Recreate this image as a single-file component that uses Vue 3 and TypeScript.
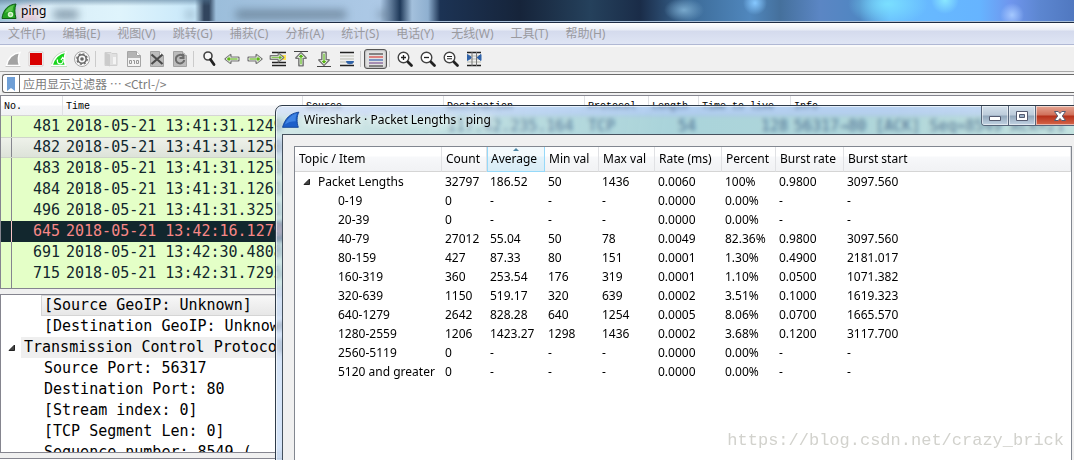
<script setup lang="ts">
import { ref } from 'vue'

interface Packet {
  no: number
  time: string
  state?: 'selected' | 'error'
  source?: string
  destination?: string
  protocol?: string
  length?: string
  ttl?: string
  info?: string
}

const menus: string[] = [
  '文件(F)', '编辑(E)', '视图(V)', '跳转(G)', '捕获(C)', '分析(A)',
  '统计(S)', '电话(Y)', '无线(W)', '工具(T)', '帮助(H)',
]

const packets: Packet[] = [
  { no: 481, time: '2018-05-21 13:41:31.1249', destination: '117.42.235.164', protocol: 'TCP', length: '54', ttl: '128', info: '56317→80 [ACK] Seq=8549 Ack=21' },
  { no: 482, time: '2018-05-21 13:41:31.1250', state: 'selected' },
  { no: 483, time: '2018-05-21 13:41:31.1251' },
  { no: 484, time: '2018-05-21 13:41:31.1261' },
  { no: 496, time: '2018-05-21 13:41:31.3251' },
  { no: 645, time: '2018-05-21 13:42:16.1279', state: 'error' },
  { no: 691, time: '2018-05-21 13:42:30.4808' },
  { no: 715, time: '2018-05-21 13:42:31.7295' },
]

const columns: string[] = [
  'Topic / Item', 'Count', 'Average', 'Min val', 'Max val',
  'Rate (ms)', 'Percent', 'Burst rate', 'Burst start',
]
const sorted = ref('Average')

const stats: string[][] = [
  ['Packet Lengths', '32797', '186.52', '50', '1436', '0.0060', '100%', '0.9800', '3097.560'],
  ['0-19', '0', '-', '-', '-', '0.0000', '0.00%', '-', '-'],
  ['20-39', '0', '-', '-', '-', '0.0000', '0.00%', '-', '-'],
  ['40-79', '27012', '55.04', '50', '78', '0.0049', '82.36%', '0.9800', '3097.560'],
  ['80-159', '427', '87.33', '80', '151', '0.0001', '1.30%', '0.4900', '2181.017'],
  ['160-319', '360', '253.54', '176', '319', '0.0001', '1.10%', '0.0500', '1071.382'],
  ['320-639', '1150', '519.17', '320', '639', '0.0002', '3.51%', '0.1000', '1619.323'],
  ['640-1279', '2642', '828.28', '640', '1254', '0.0005', '8.06%', '0.0700', '1665.570'],
  ['1280-2559', '1206', '1423.27', '1298', '1436', '0.0002', '3.68%', '0.1200', '3117.700'],
  ['2560-5119', '0', '-', '-', '-', '0.0000', '0.00%', '-', '-'],
  ['5120 and greater', '0', '-', '-', '-', '0.0000', '0.00%', '-', '-'],
]
</script>

<template>
  <div class="desktop" lang="zh-CN">
    <header class="titlebar">
      <div class="scenery" aria-hidden="true">
        <i class="smudge s1"></i><i class="smudge s2"></i><i class="smudge s3"></i><i class="smudge s4"></i>
      </div>
      <svg class="app-icon" viewBox="0 0 16 17" aria-hidden="true">
        <path d="M1 15.500C2 7 7 1.500 15 1c-1.500 4-1.500 9 0 14.500z" fill="#23a123" stroke="#0d5c12" />
        <path d="M4 10C6 5 9 3 13 2c-1 2-1.500 4-1.500 6C8 8 6 9 4 10z" fill="#74d35f" opacity=".7" />
        <circle cx="9.500" cy="11.500" r="2" fill="#8fdc80" stroke="#d8f6d0" stroke-width="1.500" />
      </svg>
      <h1>ping</h1>
    </header>

    <nav class="menubar">
      <button v-for="m in menus" :key="m" type="button">{{ m }}</button>
    </nav>

    <div class="toolbar" role="toolbar">
      <button type="button" aria-label="Start">
        <svg viewBox="0 0 20 20"><path d="M3.500 16.500C5 9 9 4.500 17 3.500c-2 3.500-2 8.500-.5 13z" fill="#a3a3a3" stroke="#fff" stroke-width="1.500" /><path d="M2.500 17.500h15" stroke="#c6c6c6" /></svg>
      </button>
      <button type="button" aria-label="Stop">
        <svg viewBox="0 0 20 20"><path d="M3.500 3.500h13v13h-13z" fill="#d90000" stroke="#fff" /><path d="M3 3h14v14H3z" fill="none" stroke="#c5baba" stroke-width=".6" /></svg>
      </button>
      <button type="button" aria-label="Restart">
        <svg viewBox="0 0 20 20"><path d="M3 16.500C5 9 9 4.500 17 3c-2 4-2 9-.5 13.500z" fill="#18d51d" stroke="#fff" stroke-width="1.500" /><path d="M2 17.500h16M2.500 15C4 9 8 4 16 2.500" fill="none" stroke="#aacfaa" stroke-width=".7" /><path d="M8.500 10.500c-1 3 1 4.500 3 4.300 2-.2 3-2 2.500-4M12 11l1.700-2.500L16 11" fill="none" stroke="#fff" stroke-width="1.300" /></svg>
      </button>
      <button type="button" aria-label="Options">
        <svg viewBox="0 0 20 20"><circle cx="10" cy="10" r="7.500" fill="#f8f8f8" stroke="#a5a5a5" /><circle cx="10" cy="10" r="4.200" fill="none" stroke="#666" stroke-width="1.600" /><circle cx="10" cy="10" r="5.300" fill="none" stroke="#666" stroke-width="1.200" stroke-dasharray="2 2.160" /><circle cx="10" cy="10" r="1.800" fill="#666" /></svg>
      </button>
      <i class="sep"></i>
      <button type="button" aria-label="Open">
        <svg viewBox="0 0 20 20"><path d="M4 3.500h6l1 1h5v12H4z" fill="#e0e0e0" stroke="#cfcfcf" /><path d="M4 3.500l5 2v12l-5-2z" fill="#cbcbcb" /><path d="M12 8h3v7h-3z" fill="#f4f4f4" /></svg>
      </button>
      <button type="button" aria-label="Save">
        <svg viewBox="0 0 20 20"><path d="M3.500 2.500h9l4 4v11h-13z" fill="#f3f3f3" stroke="#a5a5a5" /><path d="M4 3h8v4h4v2H4z" fill="#b4b4b4" /><path d="M12.500 2.500v4h4" fill="#fff" stroke="#a5a5a5" /><path d="M5.500 11.500h2v3h-2zM12.500 11.500h2v3h-2zM9 11.500h1.500V15" fill="none" stroke="#999" /></svg>
      </button>
      <button type="button" aria-label="Close">
        <svg viewBox="0 0 20 20"><path d="M3.500 2.500h9l4 4v11h-13z" fill="#bcbcbc" stroke="#a2a2a2" /><path d="M12.500 2.500v4h4" fill="#fff" stroke="#a5a5a5" /><path d="M4.500 5.500l11 9.500M15.500 5.500l-11 9.500" stroke="#4b4b4b" stroke-width="2.200" /></svg>
      </button>
      <button type="button" aria-label="Reload">
        <svg viewBox="0 0 20 20"><path d="M3.500 2.500h9l4 4v11h-13z" fill="#bcbcbc" stroke="#a2a2a2" /><path d="M12.500 2.500v4h4" fill="#fff" stroke="#a5a5a5" /><path d="M13 7a4.300 4.300 0 1 0 1.300 4M9.500 9h4V4.500" fill="none" stroke="#6c6c6c" stroke-width="2" /></svg>
      </button>
      <i class="sep"></i>
      <button type="button" aria-label="Find">
        <svg viewBox="0 0 20 20"><circle cx="9" cy="7" r="4" fill="#f8f8f8" stroke="#444" stroke-width="1.600" /><path d="M11.500 10.500l3.500 5" stroke="#222" stroke-width="2.800" stroke-linecap="round" /></svg>
      </button>
      <button type="button" aria-label="Previous">
        <svg viewBox="0 0 20 20"><path d="M3.500 10l5-4v2.500h8v3h-8V14z" fill="#62b81f" stroke="#777" stroke-width="2.200" stroke-linejoin="round" /><path d="M4 10l4-3.200V9h8v2H8v2.200z" fill="#61b51b" stroke="#fff" stroke-width=".8" /></svg>
      </button>
      <button type="button" aria-label="Next">
        <svg viewBox="0 0 20 20"><path d="M16.500 10l-5-4v2.500h-8v3h8V14z" fill="#62b81f" stroke="#777" stroke-width="2.200" stroke-linejoin="round" /><path d="M16 10l-4-3.200V9H4v2h8v2.200z" fill="#61b51b" stroke="#fff" stroke-width=".8" /></svg>
      </button>
      <button type="button" aria-label="Go to packet">
        <svg viewBox="0 0 20 20"><path d="M4 3.500h14M4 13.500h14M4 16.500h14" stroke="#222" stroke-width="1.400" /><path d="M12 6h6v5h-6z" fill="#ffe44f" /><path d="M15.500 8.500l-5-4V7H2.500v3h8v2.500z" fill="#62b81f" stroke="#777" stroke-width="1.800" stroke-linejoin="round" /><path d="M14.500 8.500L11 5.700v2H3.200v1.600H11v2z" fill="#62b81f" stroke="#fff" stroke-width=".7" /></svg>
      </button>
      <button type="button" aria-label="First packet">
        <svg viewBox="0 0 20 20"><path d="M3 2.500h14" stroke="#444" /><path d="M10 4l5 5h-3v7.500H8V9H5z" fill="#57b516" stroke="#777" stroke-width="1.800" stroke-linejoin="round" /><path d="M10 4.800l3.400 3.600H11v7.300H9V8.400H6.600z" fill="#57b516" stroke="#fff" stroke-width=".8" /></svg>
      </button>
      <button type="button" aria-label="Last packet">
        <svg viewBox="0 0 20 20"><path d="M3 17.500h14" stroke="#444" /><path d="M10 16l5-5h-3V3.500H8V11H5z" fill="#57b516" stroke="#777" stroke-width="1.800" stroke-linejoin="round" /><path d="M10 15.200l3.400-3.600H11V4.300H9v7.300H6.600z" fill="#57b516" stroke="#fff" stroke-width=".8" /></svg>
      </button>
      <button type="button" aria-label="Auto scroll">
        <svg viewBox="0 0 20 20"><path d="M3 3.500h14M3 16.500h14" stroke="#222" stroke-width="1.400" /><path d="M3 7h14M3 10h14M3 13h14" stroke="#b9bbb0" /><path d="M9.500 12.500h7c0 3-7 3-7 0z" fill="#2f62a8" stroke="#2f62a8" /></svg>
      </button>
      <i class="sep"></i>
      <button type="button" class="pressed" aria-label="Colorize" aria-pressed="true">
        <svg viewBox="0 0 20 20"><path d="M3 4h14M3 16h14" stroke="#222" stroke-width="1.200" /><path d="M3 7h14" stroke="#d8413c" stroke-width="1.200" /><path d="M3 10h14" stroke="#3462b0" stroke-width="1.200" /><path d="M3 13h14" stroke="#7c5592" stroke-width="1.200" /></svg>
      </button>
      <i class="sep"></i>
      <button type="button" aria-label="Zoom in">
        <svg viewBox="0 0 20 20"><circle cx="8.500" cy="8.500" r="5.300" fill="#fff" stroke="#444" stroke-width="1.400" /><path d="M13 13l3.500 3.500" stroke="#222" stroke-width="2.800" stroke-linecap="round" /><path d="M6 8.500h5M8.500 6v5" stroke="#222" stroke-width="1.300" /></svg>
      </button>
      <button type="button" aria-label="Zoom out">
        <svg viewBox="0 0 20 20"><circle cx="8.500" cy="8.500" r="5.300" fill="#fff" stroke="#444" stroke-width="1.400" /><path d="M13 13l3.500 3.500" stroke="#222" stroke-width="2.800" stroke-linecap="round" /><path d="M6 8.500h5" stroke="#222" stroke-width="1.300" /></svg>
      </button>
      <button type="button" aria-label="Normal size">
        <svg viewBox="0 0 20 20"><circle cx="8.500" cy="8.500" r="5.300" fill="#fff" stroke="#444" stroke-width="1.400" /><path d="M13 13l3.500 3.500" stroke="#222" stroke-width="2.800" stroke-linecap="round" /><path d="M6 7.500h5M6 9.700h5" stroke="#222" stroke-width="1.100" /></svg>
      </button>
      <button type="button" aria-label="Resize columns">
        <svg viewBox="0 0 20 20"><path d="M3 3.500h14M3 16.500h14" stroke="#222" stroke-width="1.400" /><path d="M3 7h14M3 10h14M3 13h14" stroke="#b9bbb0" /><path d="M8 3v14M12.500 3v14" stroke="#777" /><path d="M3.500 5.500l3.500 2.500v1l-3.500 2.500zM17 5.500L13.500 8v1l3.500 2.500z" fill="#2f62a8" stroke="#2f62a8" /></svg>
      </button>
    </div>

    <div class="filter">
      <button type="button" class="bookmark" aria-label="Bookmark">
        <svg viewBox="0 0 10 14"><path d="M1 0h8v14L5 11l-4 3z" fill="#6f9fd6" /></svg>
      </button>
      <input type="text" aria-label="Display filter" placeholder="应用显示过滤器 … &lt;Ctrl-/&gt;" />
    </div>

    <section class="packets">
      <table>
        <colgroup>
          <col class="p-no" /><col class="p-time" /><col class="p-addr" /><col class="p-addr" />
          <col class="p-proto" /><col class="p-len" /><col class="p-ttl" /><col />
        </colgroup>
        <thead>
          <tr><th>No.</th><th>Time</th><th>Source</th><th>Destination</th><th>Protocol</th><th>Length</th><th>Time to live</th><th>Info</th></tr>
        </thead>
        <tbody>
          <tr v-for="p in packets" :key="p.no" :class="p.state">
            <td class="num">{{ p.no }}</td><td>{{ p.time }}</td><td>{{ p.source }}</td><td>{{ p.destination }}</td>
            <td>{{ p.protocol }}</td><td class="num">{{ p.length }}</td><td class="num">{{ p.ttl }}</td><td>{{ p.info }}</td>
          </tr>
        </tbody>
      </table>
    </section>

    <section class="details">
      <p class="current">[Source GeoIP: Unknown]</p>
      <p>[Destination GeoIP: Unknown]</p>
      <div class="branch">
        <svg class="expander" viewBox="0 0 8 8" aria-hidden="true"><path d="M6.500 1v5.500H1z" fill="#444" stroke="#222" /></svg>
        <p>Transmission Control Protocol</p>
      </div>
      <p>Source Port: 56317</p>
      <p>Destination Port: 80</p>
      <p>[Stream index: 0]</p>
      <p>[TCP Segment Len: 0]</p>
      <p class="pre">Sequence number: 8549    (</p>
    </section>
    <section class="bytes"></section>

    <section class="dialog" role="dialog" aria-labelledby="dialog-title">
      <header class="caption">
        <svg class="fin" viewBox="0 0 16 16" aria-hidden="true">
          <path d="M.5 14.500C2.500 7 7 2 15 1c-2 3.500-2 9-.5 13.500z" fill="#1c5fc9" stroke="#0c3f95" stroke-width=".8" />
          <path d="M2.500 12C5 6.500 8 3.500 13.500 2c-1.500 3-1.500 5-1.300 7C8 9 5 10 2.500 12z" fill="#4d93ee" opacity=".7" />
        </svg>
        <h2 id="dialog-title">Wireshark · Packet Lengths · ping</h2>
        <div class="controls">
          <button type="button" aria-label="Minimize">
            <svg viewBox="0 0 14 14"><path d="M1.500 7.500h11v4h-11z" fill="#fff" stroke="#555b70" /></svg>
          </button>
          <button type="button" aria-label="Maximize">
            <svg viewBox="0 0 14 14"><path d="M1.500 2.500h11v9h-11z" fill="#fff" stroke="#555b70" /><path d="M4.500 5.500h5v3h-5z" fill="#9db2c8" stroke="#555b70" /></svg>
          </button>
          <button type="button" class="close" aria-label="Close">
            <svg viewBox="0 0 14 14"><path d="M1.500 2.500h3.700L7 4.500l1.800-2h3.700L9.300 7l3.200 4.500H8.800L7 9.500l-1.800 2H1.500L4.700 7z" fill="#fff" stroke="#555b70" /></svg>
          </button>
        </div>
      </header>
      <div class="body">
        <div class="tree">
          <table>
            <colgroup>
              <col class="c-topic" /><col class="c-count" /><col class="c-avg" /><col class="c-val" /><col class="c-max" />
              <col class="c-rate" /><col class="c-val" /><col class="c-burst" /><col />
            </colgroup>
            <thead>
              <tr>
                <th v-for="c in columns" :key="c" :class="{ sorted: c === sorted }" scope="col">
                  <button type="button" @click="sorted = c">{{ c }}</button>
                </th>
              </tr>
            </thead>
            <tbody>
              <tr v-for="(row, i) in stats" :key="row[0]">
                <td v-for="(cell, j) in row" :key="j" :class="{ child: j === 0 && i > 0 }">
                  <svg v-if="i === 0 && j === 0" class="expander" viewBox="0 0 8 8" aria-hidden="true"><path d="M6.500 1v5.500H1z" fill="#444" stroke="#222" /></svg>{{ cell }}
                </td>
              </tr>
            </tbody>
          </table>
        </div>
      </div>
    </section>

    <div class="watermark">https://blog.csdn.net/crazy_brick</div>
  </div>
</template>

<style>
body {
  overflow: hidden;
}
</style>

<style scoped>
.desktop {
  position: relative;
  display: flex;
  flex-direction: column;
  height: 100vh;
  overflow: hidden;
  background: #f0f0f0;
  color: #000;
  font: 12px "Noto Sans", "Noto Sans CJK SC", sans-serif;
}
h1, h2, p {
  margin: 0;
  font-weight: 400;
}
button {
  margin: 0;
  padding: 0;
  border: 0;
  background: none;
  color: inherit;
  font: inherit;
}
svg {
  display: block;
}

.titlebar {
  position: relative;
  isolation: isolate;
  flex: none;
  display: flex;
  align-items: center;
  gap: 4px;
  height: 23px;
  padding-left: 1px;
  box-sizing: border-box;
  border-bottom: 1px solid #1e2c44;
}
.scenery {
  position: absolute;
  inset: 0;
  z-index: -1;
  overflow: hidden;
  border-bottom: 1px solid #a9bfd8;
  background:
    linear-gradient(#50729088, transparent 6px) 0 0 / 210px 100% no-repeat,
    radial-gradient(ellipse 20px 14px at 29px 15px, #f5b9c8cc, transparent) 0 0 / 210px 100% no-repeat,
    radial-gradient(circle 12px at 755px 3px, #86c8ff, transparent),
    radial-gradient(circle 12px at 1012px 15px, #a4c8ff, transparent),
    radial-gradient(circle 14px at 945px 0, #8ae8ff, transparent),
    radial-gradient(ellipse 40px 22px at 888px 4px, #7adfff, transparent),
    radial-gradient(ellipse 20px 12px at 684px 10px, #78a8cc, transparent),
    linear-gradient(90deg, #9fc4d8 0, #d8edf8 50px, #dff4fc 120px, #c8e8fa 195px, #31455e 204px, #31455e 209px,
      #9cbedb 216px, #adc9e6 380px, #1e3858 400px, #a3c0dc 412px, #8fb0d0 428px, #1c3354 440px, #16243a 520px,
      #25415c 590px, #1a2c48 640px, #3c6b98 690px, #5087bd 750px, #45709c 780px, #5b86c4 820px, #4f86c2 860px,
      #68bcff 890px, #66b4ff 980px, #6f96ee 1010px, #5c86d0 1040px, #5078c0 1074px);
}
.smudge {
  position: absolute;
  top: 10px;
  height: 9px;
  background: #5d7488;
  filter: blur(4px);
  opacity: .7;
}
.s1 { left: 54px; width: 24px; }
.s2 { left: 186px; width: 8px; opacity: .4; }
.s3 { left: 236px; width: 110px; }
.s4 { left: 378px; width: 10px; opacity: .5; }
.app-icon {
  width: 16px;
  height: 17px;
}
.titlebar h1 {
  font-size: 12px;
  line-height: 22px;
  text-shadow: 0 0 6px #fff, 0 0 6px #fff;
}

.menubar {
  flex: none;
  display: flex;
  gap: 17px;
  height: 21px;
  padding-left: 8px;
  border-bottom: 1px solid #b0b8d4;
  background: linear-gradient(#fff, #e9edf6 7px, #d4daed 8px, #dfe5f4);
  color: #9a9a9f;
}
.menubar button {
  line-height: 21px;
  white-space: nowrap;
}

.toolbar {
  flex: none;
  display: flex;
  align-items: center;
  height: 24px;
  padding-left: 1px;
  border-top: 2px solid #fafafa;
  border-bottom: 1px solid #a8a8a8;
}
.toolbar button {
  display: grid;
  place-items: center;
  width: 23px;
  height: 20px;
  box-sizing: border-box;
}
.toolbar svg {
  width: 20px;
  height: 20px;
}
.toolbar .pressed {
  border: 1px solid #555;
  border-radius: 3px;
  background: #e2e2e2;
  box-shadow: inset 0 0 2px #777;
}
.sep {
  width: 1px;
  height: 16px;
  margin: 0 3px 0 2px;
  background: #cbcbcb;
}

.filter {
  flex: none;
  display: flex;
  height: 17px;
  margin: 2px 0 2px 2px;
  border: 1px solid #6a6a6a;
  border-right: 0;
  border-radius: 3px 0 0 3px;
  background: #fff;
}
.bookmark {
  display: grid;
  place-items: center;
  width: 17px;
  border-right: 1px solid #6a6a6a;
}
.bookmark svg {
  width: 10px;
  height: 14px;
}
.filter input {
  flex: 1;
  min-width: 0;
  padding: 0 3px;
  border: 0;
  outline: 0;
  background: none;
  font: 12px/17px "Noto Sans CJK SC", sans-serif;
}
.filter input::placeholder {
  color: #7c7c7c;
  opacity: 1;
}

.packets {
  flex: none;
  height: 192px;
  overflow: hidden;
  border: 1px solid #85858f;
  border-right: 0;
  background: linear-gradient(#85858f, #85858f) 10px 0 / 1px 100% no-repeat #e4ffc7;
}
table {
  width: 100%;
  border-collapse: separate;
  border-spacing: 0;
  table-layout: fixed;
}
th, td {
  overflow: hidden;
  padding: 0;
  font-weight: 400;
  text-align: left;
  white-space: nowrap;
}
.p-no { width: 62px; }
.p-time { width: 240px; }
.p-addr { width: 141px; }
.p-proto { width: 64px; }
.p-len { width: 50px; }
.p-ttl { width: 92px; }
.packets th {
  height: 20px;
  box-sizing: border-box;
  padding: 2px 0 0 3px;
  border-right: 1px solid #e0e1e4;
  border-bottom: 1px solid #d5d5d5;
  background: linear-gradient(#fff 9px, #f5f6f8 10px, #f1f2f4);
  font: 10px/16px "Liberation Mono", monospace;
}
.packets td {
  height: 21px;
  padding-left: 3px;
  color: #12272e;
  font: 15px/21px "DejaVu Sans Mono", monospace;
}
.packets td.num {
  padding: 0 3px 0 0;
  text-align: right;
}
.packets .selected td {
  background: linear-gradient(#eff2eb, #dce2d8);
  box-shadow: inset 0 1px #cfd5ca, inset 0 -1px #cfd5ca;
}
.packets .error td {
  background: #12272e;
  color: #f78787;
}
.packets .error td:first-child {
  background: linear-gradient(#f7c7c7, #f7c7c7) 10px 0 / 1px 100% no-repeat #12272e;
}
.packets .selected td:first-child {
  background: linear-gradient(#85858f, #85858f) 10px 0 / 1px 100% no-repeat, linear-gradient(#eff2eb, #dce2d8);
}

.details {
  flex: 1;
  min-height: 0;
  overflow: hidden;
  margin-top: 5px;
  border: 1px solid #85858f;
  border-right: 0;
  background: #fff;
  font: 15px/21px "DejaVu Sans Mono", monospace;
  white-space: nowrap;
}
.details > p {
  margin-left: 40px;
  padding-left: 3px;
}
.details .pre {
  white-space: pre;
}
.details .current {
  background: linear-gradient(#f8f8f8, #e6e6e6);
  box-shadow: inset 0 0 0 1px #d5d5d5;
}
.branch {
  display: flex;
  align-items: center;
  gap: 5px;
  padding-left: 7px;
}
.branch p {
  flex: 1;
  padding-left: 3px;
  background: #efefef;
}
.expander {
  width: 8px;
  height: 8px;
}
.bytes {
  flex: none;
  height: 1px;
  margin-top: 5px;
  border-top: 1px solid #85858f;
  background: #fff;
}

/* The statistics window extends past the right edge of the screen. */
.dialog {
  position: absolute;
  inset: 105px -18px -10px 275px;
  display: flex;
  flex-direction: column;
  box-sizing: border-box;
  padding: 0 7px 0 6px;
  border: 1px solid #2f3c4a;
  border-radius: 7px 7px 0 0;
  background: linear-gradient(100deg, #c9dcf6aa, #78aeeb88 45%, #82b2ea88 70%, #bcd8f499);
  box-shadow: inset 0 0 0 1px #ffffff99;
  backdrop-filter: blur(2px);
}
.caption {
  flex: none;
  display: flex;
  height: 28px;
}
.fin {
  width: 18px;
  height: 18px;
  margin: 5px 4px 0 0;
}
.caption h2 {
  flex: 1;
  font-size: 12px;
  line-height: 28px;
  text-shadow: 0 0 6px #fff, 0 0 8px #fff;
}
.controls {
  display: flex;
  height: 19px;
  border: 1px solid #57657a;
  border-top: 0;
  border-radius: 0 0 4px 4px;
  overflow: hidden;
}
.controls button {
  display: grid;
  place-items: center;
  width: 27px;
  border-right: 1px solid #57657a;
  background: linear-gradient(#d4e1ec, #bccbda 9px, #91a6ba 10px, #c3d4e4);
  box-shadow: inset 0 0 0 1px #ffffff88;
}
.controls svg {
  width: 14px;
  height: 14px;
}
.controls .close {
  width: 47px;
  border-right: 0;
  background: linear-gradient(#e5a694, #d0705a 9px, #b5301a 10px, #d6674a);
}
.body {
  flex: 1;
  display: flex;
  min-height: 0;
  padding: 11px 11px 0;
  border: 1px solid #46525e;
  background: #f0f0f0;
}
.tree {
  flex: 1;
  border: 1px solid #828790;
  background: #fff;
}
.c-topic { width: 147px; }
.c-count { width: 45px; }
.c-avg { width: 58px; }
.c-val { width: 54px; }
.c-max { width: 56px; }
.c-rate { width: 67px; }
.c-burst { width: 68px; }
.tree th {
  height: 25px;
  box-sizing: border-box;
  border-right: 1px solid #e0e1e4;
  border-bottom: 1px solid #d5d5d5;
  background: linear-gradient(#fff 9px, #f7f8fa 10px, #f1f2f4);
}
.tree th button {
  display: block;
  width: 100%;
  padding-left: 4px;
  line-height: 24px;
  text-align: left;
}
.tree th.sorted {
  position: relative;
  border-color: #96d9f9;
  background: linear-gradient(#f2f9fc 9px, #e2f2fa 10px, #d8ecf6);
  box-shadow: inset 1px 0 #96d9f9;
}
.tree th.sorted::before {
  content: "";
  position: absolute;
  top: 1px;
  left: 50%;
  margin-left: -3px;
  border: 3px solid transparent;
  border-top: 0;
  border-bottom-color: #4d87a5;
}
.tree td {
  height: 19px;
  padding-left: 3px;
  line-height: 19px;
}
.tree td.child {
  padding-left: 43px;
}
.tree td .expander {
  display: inline-block;
  margin: 0 7px 0 5px;
}

.watermark {
  position: absolute;
  right: 10px;
  bottom: 8px;
  color: #d2d2cd;
  font: 17px/22px "Liberation Mono", monospace;
}
</style>
